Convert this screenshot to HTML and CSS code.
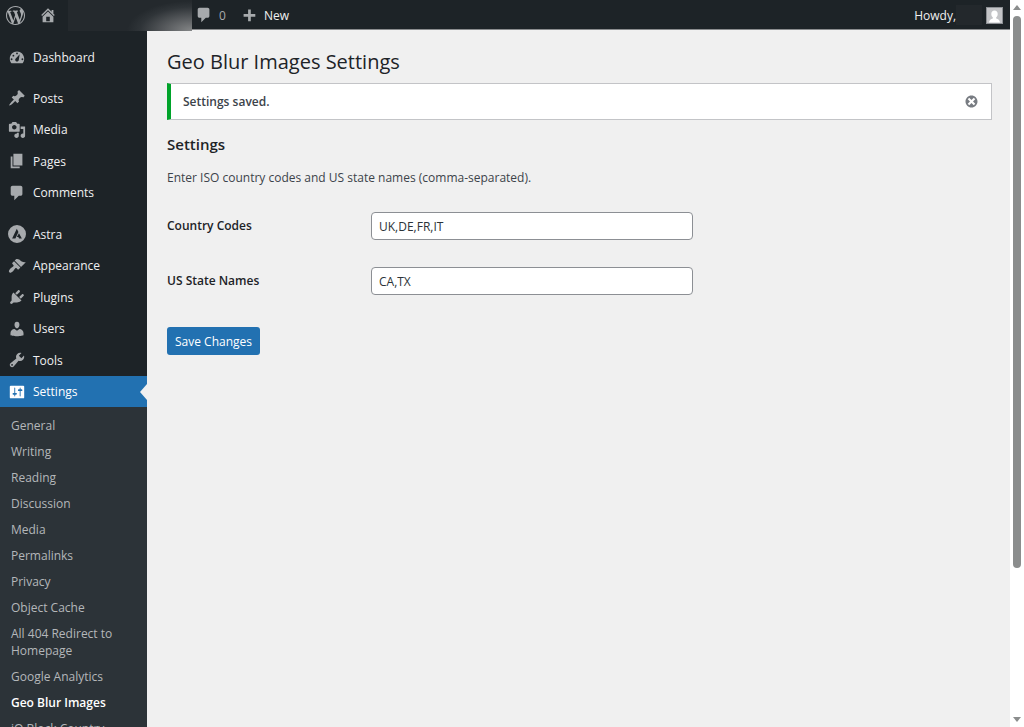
FILE: index.html
```
<!DOCTYPE html>
<html lang="en">

<head>
    <meta charset="UTF-8">
    <meta name="viewport" content="width=device-width, initial-scale=1.0">
    <title>Geo Blur Images Settings</title>
    <link rel="stylesheet" href="styles.css">
</head>

<body>
    <div class="app">
        <header class="bar">
            <a href="#" class="bar_logo" aria-label="About WordPress"><svg class="icon_l" viewBox="0 0 20 20"><path d="M20 10c0-5.51-4.49-10-10-10C4.48 0 0 4.49 0 10c0 5.52 4.48 10 10 10 5.51 0 10-4.48 10-10zM7.78 15.37L4.37 6.22c.55-.02 1.17-.08 1.17-.08.5-.06.44-1.13-.06-1.11 0 0-1.45.11-2.37.11-.18 0-.37 0-.58-.01C4.12 2.69 6.87 1.11 10 1.11c2.33 0 4.45.87 6.05 2.34-.68-.11-1.65.39-1.65 1.58 0 .74.45 1.36.9 2.1.35.61.55 1.36.55 2.46 0 1.49-1.4 5-1.4 5l-3.03-8.37c.54-.02.82-.17.82-.17.5-.05.44-1.25-.06-1.22 0 0-1.44.12-2.38.12-.87 0-2.33-.12-2.33-.12-.5-.03-.56 1.2-.06 1.22l.92.08 1.26 3.41zM17.41 10c.24-.64.74-1.87.43-4.25.7 1.29 1.05 2.71 1.05 4.25 0 3.29-1.73 6.24-4.4 7.78.97-2.59 1.94-5.2 2.92-7.78zM6.1 18.09C3.12 16.65 1.11 13.53 1.11 10c0-1.3.23-2.48.72-3.59C3.25 10.3 4.67 14.2 6.1 18.09zm4.03-6.63l2.58 6.98c-.86.29-1.76.45-2.71.45-.79 0-1.57-.11-2.29-.33.81-2.38 1.62-4.74 2.42-7.1z"/></svg></a>
            <a href="#" class="bar_home" aria-label="Visit site"><svg class="icon" viewBox="0 0 20 20"><path d="M16 8.5l1.53 1.53-1.06 1.06L10 4.6l-6.47 6.49-1.06-1.06L10 2.5l4 4v-2h2v4zm-6-2.46l6 5.99V18H4v-5.97zM12 17v-5H8v5h4z"/></svg></a>
            <span class="bar_site"></span>
            <a href="#" class="bar_comments"><svg class="icon" viewBox="0 0 20 20"><path d="M5 2h9c1.1 0 2 .9 2 2v7c0 1.1-.9 2-2 2h-2l-5 5v-5H5c-1.1 0-2-.9-2-2V4c0-1.1.9-2 2-2z"/></svg><span>0</span></a>
            <a href="#" class="bar_new"><svg class="icon" viewBox="0 0 20 20"><path d="M17 9v3h-5v5H9v-5H4V9h5V4h3v5z"/></svg><span>New</span></a>
            <a href="#" class="bar_user"><span>Howdy,</span><span class="user_name"></span>
                <svg class="avatar" viewBox="0 0 17 17"><path class="avatar_bg" d="M0 0h17v17H0z"/><path class="avatar_in" d="M1 1h15v15H1z"/><path class="avatar_man" d="M8.500 3.500c2 0 3.200 1.500 3.200 3.500 0 1.500-.6 2.700-1.500 3.300v1.200c2 .5 3.500 1.500 3.800 4H3c.3-2.500 1.800-3.500 3.800-4v-1.200C5.900 9.700 5.300 8.500 5.300 7c0-2 1.200-3.500 3.200-3.500z"/></svg>
            </a>
        </header>

        <div class="wrap">
            <nav class="side">
                <ul class="menu">
                    <li><a href="#"><svg class="icon" viewBox="0 0 20 20"><path fill-rule="evenodd" d="M3.760 17h12.480c1.100-1.370 1.760-3.110 1.760-5 0-4.420-3.580-8-8-8s-8 3.580-8 8c0 1.890.66 3.630 1.760 5zM9 6a1 1 0 1 0 2 0 1 1 0 1 0-2 0zM5 8.500a1 1 0 1 0 2 0 1 1 0 1 0-2 0zM3 12.500a1 1 0 1 0 2 0 1 1 0 1 0-2 0zM15 12.500a1 1 0 1 0 2 0 1 1 0 1 0-2 0zM8.630 11.550L13 7l-1 6c0 1.100-.9 2-2 2s-2-.9-2-2c0-.57.24-1.080.63-1.450z"/></svg>Dashboard</a></li>
                </ul>
                <ul class="menu menu_four">
                    <li><a href="#"><svg class="icon" viewBox="0 0 20 20"><path d="M10.440 3.020l1.820-1.820 6.360 6.350-1.830 1.820c-1.050-.68-2.480-.57-3.410.36l-.75.75c-.92.93-1.040 2.350-.35 3.410l-1.830 1.820-2.410-2.410-2.800 2.790c-.42.42-3.380 2.710-3.800 2.290s1.860-3.390 2.280-3.810l2.790-2.790L4.100 9.360l1.830-1.820c1.050.69 2.480.57 3.400-.36l.75-.75c.93-.92 1.050-2.350.36-3.410z"/></svg>Posts</a></li>
                    <li><a href="#"><svg class="icon" viewBox="0 0 20 20"><path d="M13 11V4c0-.55-.45-1-1-1h-1.670L9 1H5L3.670 3H2c-.55 0-1 .45-1 1v7c0 .55.45 1 1 1h10c.55 0 1-.45 1-1zM7 4.500c1.380 0 2.500 1.120 2.500 2.500S8.380 9.500 7 9.500 4.500 8.380 4.500 7 5.620 4.500 7 4.500zM14 6h5v10.500c0 1.380-1.120 2.500-2.500 2.500S14 17.880 14 16.500s1.120-2.500 2.500-2.500c.17 0 .34.02.5.05V9h-3V6zm-4 8.050V13h2v3.500c0 1.380-1.120 2.500-2.500 2.500S7 17.880 7 16.500 8.120 14 9.500 14c.17 0 .34.02.5.05z"/></svg>Media</a></li>
                    <li><a href="#"><svg class="icon" viewBox="0 0 20 20"><path d="M6 15V2h10v13H6zm-1 1h8v2H3V5h2v11z"/></svg>Pages</a></li>
                    <li><a href="#"><svg class="icon" viewBox="0 0 20 20"><path d="M5 2h9c1.100 0 2 .9 2 2v7c0 1.100-.9 2-2 2h-2l-5 5v-5H5c-1.100 0-2-.9-2-2V4c0-1.100.9-2 2-2z"/></svg>Comments</a></li>
                </ul>
                <ul class="menu menu_six">
                    <li><a href="#"><svg class="icon" viewBox="0 0 20 20"><path fill-rule="evenodd" d="M10 0a10 10 0 1 0 0 20 10 10 0 1 0 0-20zM9.800 4.300l1.800 3.600-3.400 7.100H4.600zM12.200 9.200l3.200 5.800h-3.100l-.8-1.700H9.800z"/></svg>Astra</a></li>
                    <li><a href="#"><svg class="icon" viewBox="0 0 20 20"><path d="M14.480 11.060L7.410 3.990l1.500-1.500c.5-.56 2.300-.47 3.510.32 1.210.8 1.430 1.280 2.910 2.100 1.180.64 2.450 1.260 4.450.85zm-.71.71L6.700 4.700 4.930 6.470c-.39.39-.39 1.020 0 1.410l1.060 1.060c.39.39.39 1.030 0 1.420-.6.6-1.430 1.110-2.210 1.690-.35.26-.7.53-1.010.84C1.430 14.230.4 16.080 1.400 17.070c.99 1 2.840-.03 4.180-1.360.31-.31.58-.66.85-1.020.57-.78 1.080-1.610 1.690-2.210.39-.39 1.020-.39 1.410 0l1.060 1.060c.39.39 1.020.39 1.410 0z"/></svg>Appearance</a></li>
                    <li><a href="#"><svg class="icon" viewBox="0 0 20 20"><path d="M13.110 4.360L9.870 7.600 8 5.730l3.240-3.240c.35-.34 1.050-.2 1.560.32.52.51.66 1.210.31 1.550zm-8 1.770l.91-1.120 9.010 9.010-1.190.84c-.71.71-2.630 1.160-3.820 1.160H6.140L4.900 17.260c-.59.59-1.540.59-2.120 0-.59-.58-.59-1.530 0-2.120l1.240-1.240v-3.880c0-1.130.4-3.190 1.090-3.890zm7.260 3.970l3.240-3.240c.34-.35 1.040-.21 1.550.31.52.51.66 1.210.31 1.550l-3.240 3.250z"/></svg>Plugins</a></li>
                    <li><a href="#"><svg class="icon" viewBox="0 0 20 20"><path d="M10 9.250c-2.270 0-2.730-3.440-2.730-3.440C7 4.020 7.820 2 9.970 2c2.160 0 2.980 2.020 2.710 3.810 0 0-.41 3.440-2.680 3.440zm0 2.570L12.720 10c2.390 0 4.520 2.330 4.520 4.530v2.490s-3.650 1.130-7.240 1.130c-3.650 0-7.240-1.130-7.240-1.130v-2.490c0-2.250 1.940-4.480 4.470-4.480z"/></svg>Users</a></li>
                    <li><a href="#"><svg class="icon" viewBox="0 0 20 20"><path d="M16.680 9.770c-1.340 1.340-3.300 1.670-4.950.99l-5.410 6.520c-.99.99-2.590.99-3.580 0s-.99-2.590 0-3.570l6.520-5.420c-.68-1.650-.35-3.610.99-4.950 1.280-1.280 3.120-1.620 4.720-1.060l-2.890 2.890 2.820 2.820 2.860-2.870c.53 1.580.18 3.390-1.080 4.650zM3.810 16.210c.4.39 1.040.39 1.430 0 .4-.4.4-1.040 0-1.430-.39-.4-1.030-.4-1.430 0-.39.39-.39 1.030 0 1.430z"/></svg>Tools</a></li>
                    <li><a href="#" class="current"><svg class="icon" viewBox="0 0 20 20"><path d="M18 16V4c0-.55-.45-1-1-1H3c-.55 0-1 .45-1 1v12c0 .55.45 1 1 1h14c.55 0 1-.45 1-1zM8 11h1c.55 0 1 .45 1 1s-.45 1-1 1H8v1.500c0 .28-.22.5-.5.5s-.5-.22-.5-.5V13H6c-.55 0-1-.45-1-1s.45-1 1-1h1V5.500c0-.28.22-.5.5-.5s.5.22.5.5V11zm5-2h-1c-.55 0-1-.45-1-1s.45-1 1-1h1V5.500c0-.28.22-.5.5-.5s.5.22.5.5V7h1c.55 0 1 .45 1 1s-.45 1-1 1h-1v5.500c0 .28-.22.5-.5.5s-.5-.22-.5-.5V9z"/></svg>Settings</a></li>
                </ul>
                <ul class="submenu">
                    <li><a href="#">General</a></li>
                    <li><a href="#">Writing</a></li>
                    <li><a href="#">Reading</a></li>
                    <li><a href="#">Discussion</a></li>
                    <li><a href="#">Media</a></li>
                    <li><a href="#">Permalinks</a></li>
                    <li><a href="#">Privacy</a></li>
                    <li><a href="#">Object Cache</a></li>
                    <li><a href="#">All 404 Redirect to Homepage</a></li>
                    <li><a href="#">Google Analytics</a></li>
                    <li><a href="#" class="on">Geo Blur Images</a></li>
                    <li><a href="#">iQ Block Country</a></li>
                </ul>
            </nav>

            <main class="content">
                <h1>Geo Blur Images Settings</h1>
                <div class="notice">
                    <p>Settings saved.</p>
                    <button type="button" class="dismiss" aria-label="Dismiss this notice"><svg viewBox="0 0 20 20"><path d="M10 2c4.420 0 8 3.580 8 8s-3.580 8-8 8-8-3.580-8-8 3.580-8 8-8zm5 11l-3-3 3-3-2-2-3 3-3-3-2 2 3 3-3 3 2 2 3-3 3 3z"/></svg></button>
                </div>
                <h2>Settings</h2>
                <p class="hint">Enter ISO country codes and US state names (comma-separated).</p>
                <form>
                    <div class="row">
                        <label for="countries">Country Codes</label>
                        <input type="text" id="countries" value="UK,DE,FR,IT">
                    </div>
                    <div class="row">
                        <label for="states">US State Names</label>
                        <input type="text" id="states" value="CA,TX">
                    </div>
                    <button type="submit" class="save">Save Changes</button>
                </form>
            </main>
        </div>
    </div>

    <div class="scroll">
        <span class="arrow_up"></span>
        <span class="thumb"></span>
        <span class="arrow_down"></span>
    </div>
</body>

</html>
```

FILE: styles.css
```
* {
    margin: 0;
    padding: 0;
    box-sizing: border-box;
}

body {
    display: flex;
    height: 100vh;
    overflow: hidden;
    background-color: #f0f0f0;
    color: #3c434a;
    font-family: "Open Sans", "Noto Sans", sans-serif;
    font-size: 12px;
    line-height: 17px;
}

ul {
    list-style: none;
}

a {
    color: #f0f0f1;
    text-decoration: none;
}

svg {
    display: block;
    flex: none;
    fill: #a7aaad;
}

.icon {
    width: 18px;
    height: 18px;
}

.icon_l {
    width: 19px;
    height: 19px;
}

.app {
    display: flex;
    flex-direction: column;
    flex: 1;
    min-width: 0;
}

/* top bar */
.bar {
    position: relative;
    display: flex;
    flex: none;
    height: 29px;
    padding: 0 7px 0 6px;
    background-color: #1d2327;
}

.bar a {
    display: flex;
    align-items: center;
    height: 30px;
}

.bar_home {
    margin-left: 14px;
}

.bar_site {
    width: 124px;
    height: 31px;
    margin-left: 11px;
    background: radial-gradient(ellipse 65px 30px at 100% 100%, #858788, #5a5d60 40%, #2f3438 80%, #24292d);
}

.bar_comments {
    gap: 6px;
    margin-left: 3px;
}

.bar_comments span {
    color: #a7aaad;
}

.bar_new {
    gap: 6px;
    margin-left: 14px;
}

.bar_user {
    margin-left: auto;
}

.user_name {
    width: 26px;
    height: 20px;
    background-color: #23282c;
}

.avatar {
    width: 17px;
    height: 17px;
    margin-left: 4px;
}

.avatar_bg {
    fill: #8c8f94;
}

.avatar_in {
    fill: #c3c4c7;
}

.avatar_man {
    fill: #fff;
}

.wrap {
    display: flex;
    flex: 1;
    min-height: 0;
}

/* left menu */
.side {
    width: 147px;
    padding-top: 12px;
    background-color: #1d2327;
    overflow: hidden;
}

.menu {
    display: grid;
    grid-auto-rows: 1fr;
    height: 31px;
    margin-bottom: 10px;
}

.menu_four {
    height: 126px;
}

.menu_six {
    height: 189px;
    margin-bottom: 0;
}

.menu a {
    position: relative;
    display: flex;
    align-items: center;
    gap: 8px;
    height: 100%;
    padding: 1px 0 0 8px;
    gap: 7px;
}

.menu .current {
    background-color: #2271b1;
    color: #fff;
}

.menu .current svg {
    fill: #fff;
}

.menu .current::after {
    content: "";
    position: absolute;
    top: 8px;
    right: 0;
    border: solid transparent;
    border-width: 8px 7px 8px 0;
    border-right-color: #f0f0f0;
}

.submenu {
    padding: 6px 0;
    background-color: #2c3338;
}

.submenu a {
    display: block;
    padding: 4px 11px 5px;
    color: #b4b7ba;
}

.submenu .on {
    color: #fff;
    font-weight: 600;
}

/* page */
.content {
    flex: 1;
    padding: 17px 18px 0 20px;
    border-top: 1px solid #8a8c8e;
}

h1 {
    color: #1d2327;
    font-size: 20px;
    font-weight: 400;
    line-height: 30px;
}

.notice {
    display: flex;
    align-items: center;
    justify-content: space-between;
    height: 37px;
    margin-top: 6px;
    padding: 0 12px;
    background-color: #fff;
    border: 1px solid #c3c4c7;
    border-left: 4px solid #00a32a;
    font-weight: 600;
}

.dismiss {
    background: none;
    border: 0;
}

.dismiss svg {
    width: 15px;
    height: 15px;
    fill: #787c82;
}

h2 {
    margin-top: 14px;
    color: #1d2327;
    font-size: 15px;
    font-weight: 600;
    line-height: 20px;
}

.hint {
    margin-top: 15px;
}

form {
    padding-top: 26px;
}

.row {
    display: flex;
    margin-bottom: 27px;
}

.row label {
    width: 204px;
    padding-top: 5px;
    color: #1d2327;
    font-weight: 600;
}

.row input {
    width: 322px;
    height: 28px;
    padding: 0 7px;
    background-color: #fff;
    border: 1px solid #8c8f94;
    border-radius: 4px;
    color: #2c3338;
    font: inherit;
}

.save {
    height: 28px;
    margin-top: 5px;
    padding: 0 8px;
    background-color: #2271b1;
    border: 0;
    border-radius: 3px;
    color: #fff;
    font: inherit;
}

/* scrollbar */
.scroll {
    display: flex;
    flex-direction: column;
    align-items: center;
    width: 14px;
    padding: 5px 0;
    background-color: #fff;
}

.thumb {
    width: 8px;
    height: 77%;
    margin-top: 6px;
    background-color: #8b8d8d;
    border-radius: 4px;
}

.arrow_up {
    border: solid transparent;
    border-width: 0 4px 5px;
    border-bottom-color: #8b8d8d;
}

.arrow_down {
    margin-top: auto;
    border: solid transparent;
    border-width: 5px 4px 0;
    border-top-color: #8b8d8d;
}
```
